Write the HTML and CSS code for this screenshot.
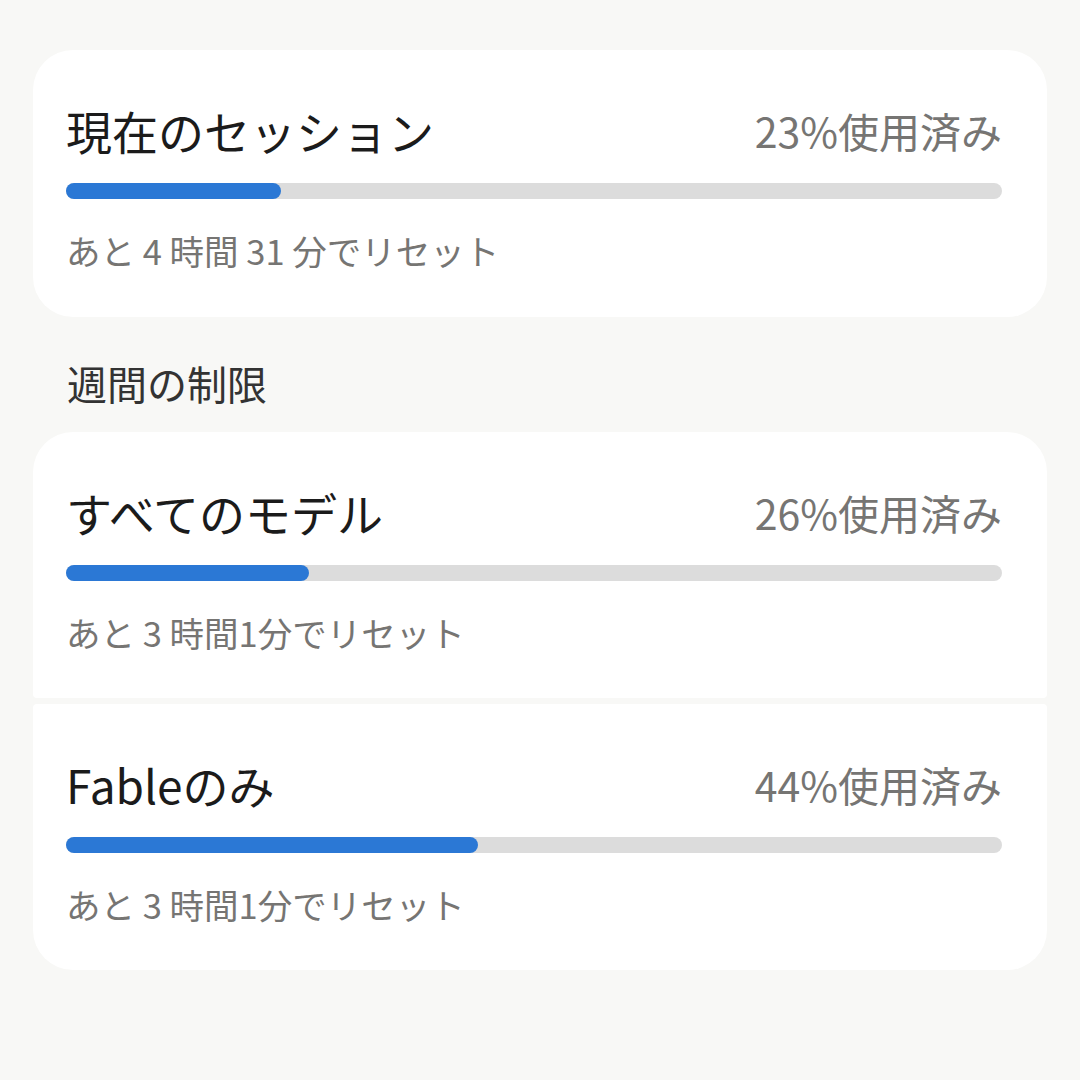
FILE: index.html
```html
<!DOCTYPE html>
<html lang="ja">
    <head>
        <meta charset="utf-8" />
        <title>使用状況</title>
        <link rel="stylesheet" href="styles.css">
    </head>
    <body>
        <div class="page">
            <div class="card single">
                <div class="cardHead">
                    <span class="cardTitle">現在のセッション</span>
                    <span class="cardUsed">23%使用済み</span>
                </div>
                <div class="track"><div class="fill" style="width: 23%"></div></div>
                <div class="reset">あと 4 時間 31 分でリセット</div>
            </div>

            <div class="sectionTitle">週間の制限</div>

            <div class="group">
                <div class="card first">
                    <div class="cardHead">
                        <span class="cardTitle">すべてのモデル</span>
                        <span class="cardUsed">26%使用済み</span>
                    </div>
                    <div class="track"><div class="fill" style="width: 26%"></div></div>
                    <div class="reset">あと 3 時間1分でリセット</div>
                </div>
                <div class="card last">
                    <div class="cardHead">
                        <span class="cardTitle">Fableのみ</span>
                        <span class="cardUsed">44%使用済み</span>
                    </div>
                    <div class="track"><div class="fill" style="width: 44%"></div></div>
                    <div class="reset">あと 3 時間1分でリセット</div>
                </div>
            </div>
        </div>
    </body>
</html>
```

FILE: styles.css
```css
html, body {
    margin: 0;
    font-family: "Noto Sans CJK JP", "Noto Sans", sans-serif;
    background-color: #f8f8f6;
    color: #1b1b1b;
}

.page {
    display: flex;
    flex-direction: column;
    padding: 50px 33px 0 33px;
}

.card {
    display: flex;
    flex-direction: column;
    height: 267px;
    box-sizing: border-box;
    padding: 50px 45px 0 33px;
    background-color: #ffffff;
    border-radius: 40px;
}

.group {
    display: flex;
    flex-direction: column;
    gap: 6px;
}

.group .card {
    height: 266px;
}

.group .first {
    border-radius: 40px 40px 4px 4px;
}

.group .last {
    border-radius: 4px 4px 40px 40px;
}

.cardHead {
    display: flex;
    justify-content: space-between;
    align-items: center;
    height: 60px;
}

.cardTitle {
    font-size: 46px;
    line-height: 60px;
    color: #1b1b1b;
}

.cardUsed {
    font-size: 41px;
    line-height: 60px;
    color: #767573;
}

.track {
    margin-top: 23px;
    height: 16px;
    border-radius: 8px;
    background-color: #dcdcdc;
}

.fill {
    height: 100%;
    border-radius: 8px;
    background-color: #2b78d5;
}

.reset {
    margin-top: 26px;
    font-size: 34.5px;
    line-height: 50px;
    color: #767573;
}

.sectionTitle {
    height: 115px;
    box-sizing: border-box;
    padding: 36px 0 0 34px;
    font-size: 40px;
    line-height: 60px;
    color: #333333;
}
```
